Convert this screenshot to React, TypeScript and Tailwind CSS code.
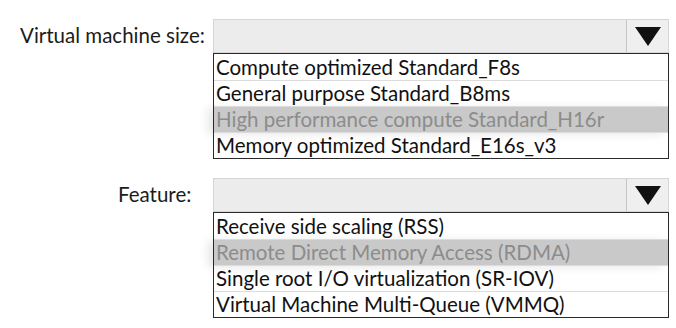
type Option = { label: string; muted?: boolean };

const sizeOptions: Option[] = [
  { label: "Compute optimized Standard_F8s" },
  { label: "General purpose Standard_B8ms" },
  { label: "High performance compute Standard_H16r", muted: true },
  { label: "Memory optimized Standard_E16s_v3" },
];

const featureOptions: Option[] = [
  { label: "Receive side scaling (RSS)" },
  { label: "Remote Direct Memory Access (RDMA)", muted: true },
  { label: "Single root I/O virtualization (SR-IOV)" },
  { label: "Virtual Machine Multi-Queue (VMMQ)" },
];

function Caret() {
  return (
    <svg width="26" height="19" viewBox="0 0 26 19">
      <polygon points="0,0 26,0 13,19" fill="#111" />
    </svg>
  );
}

function DropDown({ label, labelPad, options }: { label: string; labelPad: string; options: Option[] }) {
  return (
    <div className="flex">
      <div className={`w-[213px] shrink-0 h-[33px] flex items-center ${labelPad} text-[20.5px] text-[#1c1c1c]`}>
        {label}
      </div>
      <div className="w-[456px] flex flex-col">
        <div className="h-[34px] flex bg-[#ececec] border border-[#d6d6d6]">
          <div className="flex-1" />
          <div className="w-[42px] border-l border-[#c4c4c4] bg-[#efefef] flex items-center justify-center">
            <Caret />
          </div>
        </div>
        <div className="border border-[#2a2a2a] bg-white flex flex-col">
          {options.map((o, i) => (
            <div
              key={o.label}
              className={`h-[26px] flex items-center pl-[2px] text-[20.5px] leading-none ${
                i > 0 ? "border-t border-[#dcdcdc]" : ""
              } ${o.muted ? "bg-[#c9c9c9] text-[#8c8c8c] shadow-[-6px_2px_10px_rgba(0,0,0,0.1)]" : "text-[#111]"}`}
            >
              {o.label}
            </div>
          ))}
        </div>
      </div>
    </div>
  );
}

export default function App() {
  return (
    <div className="w-[676px] h-[328px] bg-white pt-[19px] flex flex-col gap-[19px] font-['Lato',sans-serif]">
      <DropDown label="Virtual machine size:" labelPad="pl-[20px]" options={sizeOptions} />
      <DropDown label="Feature:" labelPad="pl-[118px]" options={featureOptions} />
    </div>
  );
}
